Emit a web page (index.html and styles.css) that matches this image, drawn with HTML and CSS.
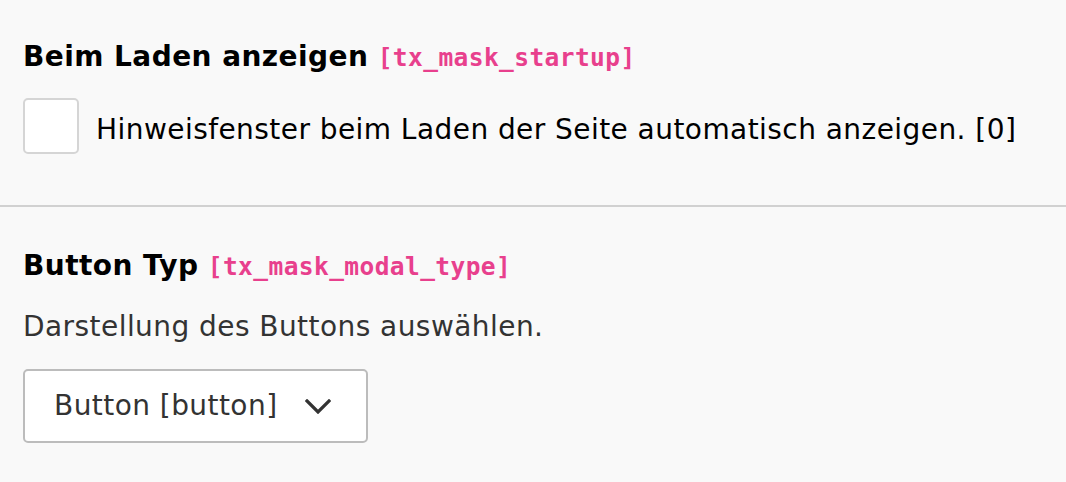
FILE: index.html
```html
<!DOCTYPE html>
<html lang="de">
<head>
<meta charset="utf-8">
<title>Form</title>
<link rel="stylesheet" href="styles.css">
</head>
<body>
<div class="form">
  <section class="field field-first">
    <div class="label"><span class="label-text">Beim Laden anzeigen</span> <code class="field-name">[tx_mask_startup]</code></div>
    <label class="check">
      <span class="checkbox"></span>
      <span class="check-text">Hinweisfenster beim Laden der Seite automatisch anzeigen. [0]</span>
    </label>
  </section>
  <hr class="divider">
  <section class="field field-second">
    <div class="label"><span class="label-text">Button Typ</span> <code class="field-name">[tx_mask_modal_type]</code></div>
    <p class="desc">Darstellung des Buttons auswählen.</p>
    <div class="select">
      <span class="select-value">Button [button]</span>
      <svg class="chevron" width="26" height="15" viewBox="0 0 26 15" aria-hidden="true"><path d="M2 2 L13 13 L24 2" fill="none" stroke="#333" stroke-width="3.2" stroke-linecap="square" stroke-linejoin="miter"/></svg>
    </div>
  </section>
</div>
</body>
</html>
```

FILE: styles.css
```css
html, body {
  margin: 0;
  padding: 0;
  background: #f9f9f9;
}
body {
  font-family: "DejaVu Sans", Verdana, sans-serif;
  font-size: 28px;
  line-height: 42px;
  letter-spacing: 0.44px;
  color: #000;
}
.form {
  display: flex;
  flex-direction: column;
}
.field {
  padding: 0 23px;
  display: flex;
  flex-direction: column;
  align-items: flex-start;
}
.field-first {
  padding-top: 36px;
  padding-bottom: 51px;
}
.field-second {
  padding-top: 38px;
}
.label {
  white-space: nowrap;
  height: 42px;
}
.label-text {
  font-weight: bold;
}
.field-name {
  font-family: "DejaVu Sans Mono", monospace;
  font-weight: bold;
  font-size: 24.5px;
  line-height: 1;
  letter-spacing: 0.42px;
  color: #e8408d;
}
.check {
  display: flex;
  align-items: flex-start;
  gap: 17px;
  margin-top: 20px;
}
.checkbox {
  width: 56px;
  height: 56px;
  box-sizing: border-box;
  border: 2px solid #d5d5d5;
  border-radius: 5px;
  background: #fff;
  flex: none;
}
.check-text {
  margin-top: 11px;
  color: #000;
  white-space: nowrap;
}
.divider {
  margin: 0;
  border: 0;
  height: 2px;
  background: #d1d1d1;
}
.desc {
  margin: 19px 0 0;
  color: #333;
}
.select {
  margin-top: 21px;
  width: 345px;
  height: 74px;
  box-sizing: border-box;
  border: 2px solid #bcbcbc;
  border-radius: 5px;
  background: #fff;
  display: flex;
  align-items: center;
  justify-content: space-between;
  padding: 0 35px 0 29px;
  color: #333;
}
.chevron {
  display: block;
  flex: none;
}
```
